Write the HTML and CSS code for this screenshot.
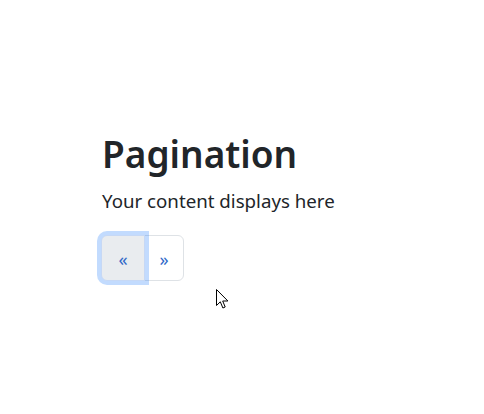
FILE: index.html
```html
<!DOCTYPE html>
<html lang="en">
<head>
<meta charset="utf-8">
<title>Pagination</title>
<link rel="stylesheet" href="styles.css">
</head>
<body>
<main class="page">
  <h1 class="title">Pagination</h1>
  <p class="lead">Your content displays here</p>
  <nav class="pager" aria-label="Page navigation">
    <a class="page-link prev is-focused" href="#" aria-label="Previous">&laquo;</a>
    <a class="page-link next" href="#" aria-label="Next">&raquo;</a>
  </nav>
</main>
<svg class="cursor" width="13" height="21" viewBox="0 0 13 21" aria-hidden="true">
  <path d="M0.5 0.5 L0.5 16.5 L4.3 12.8 L6.9 19 L9.2 18 L6.7 12 L11.9 12 Z" fill="#fff" stroke="#000" stroke-width="1" stroke-linejoin="miter"/>
</svg>
</body>
</html>
```
FILE: styles.css
```css
html, body {
  margin: 0;
  padding: 0;
  background: #ffffff;
}
body {
  font-family: "Noto Sans", "Open Sans", sans-serif;
  color: #212529;
  position: relative;
  width: 484px;
  height: 414px;
  overflow: hidden;
}
.page {
  padding: 130px 0 0 102px;
}
.title {
  margin: 0 0 8px 0;
  font-size: 37px;
  font-weight: 600;
  line-height: 48px;
  color: #212529;
}
.lead {
  margin: 0 0 19px 0;
  font-size: 18.7px;
  line-height: 30px;
  font-weight: 400;
  color: #212529;
}
.pager {
  display: flex;
  margin-left: -1px;
}
.page-link {
  display: flex;
  align-items: center;
  justify-content: center;
  height: 46px;
  box-sizing: border-box;
  border: 1px solid #dee2e6;
  color: #3068c8;
  text-decoration: none;
  font-size: 18px;
  padding-top: 2px;
  background: #fff;
}
.prev {
  width: 44px;
  border-radius: 6px 0 0 6px;
  position: relative;
  z-index: 2;
}
.next {
  width: 40px;
  margin-left: -1px;
  border-radius: 0 6px 6px 0;
}
.is-focused {
  background: #e9ecef;
  border-color: #c6d8f5;
  box-shadow: 0 0 0 4px rgba(13, 110, 253, 0.25);
}
.cursor {
  position: absolute;
  left: 216px;
  top: 289px;
}
```
